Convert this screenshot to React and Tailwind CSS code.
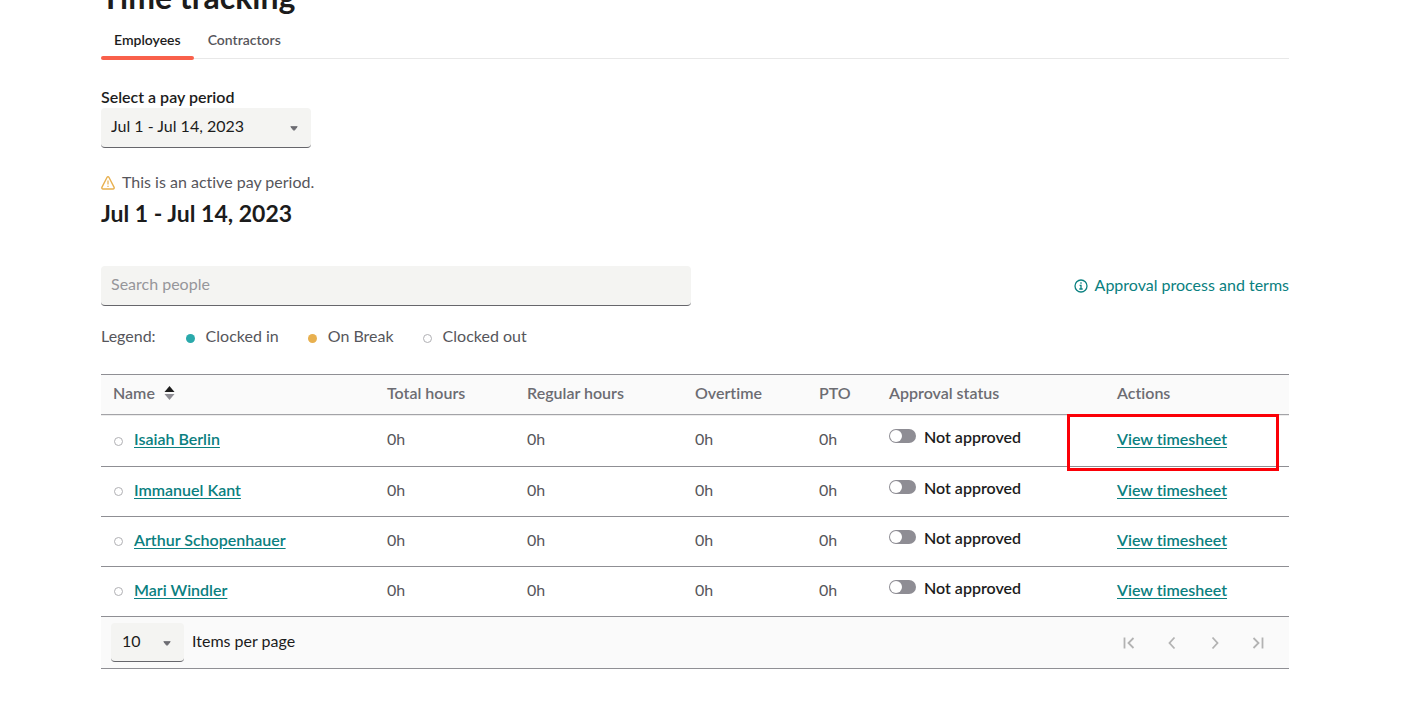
import React from "react";

const people = ["Isaiah Berlin", "Immanuel Kant", "Arthur Schopenhauer", "Mari Windler"];

function Caret({ className }) {
  return (
    <svg className={`pointer-events-none absolute ${className}`} width="8" height="5" viewBox="0 0 8 5" aria-hidden="true">
      <path d="M.8.7h6.4L4.500 4.100q-.5.4-1 0z" fill="#6c6c72" stroke="#6c6c72" strokeWidth="1" strokeLinejoin="round" />
    </svg>
  );
}

function Dot({ kind }) {
  const styles = {
    in: "bg-[#2aa9ab]",
    break: "bg-[#e8b04f]",
    out: "border border-[#b0b0b4] bg-white",
  };
  return <span className={`block h-[9px] w-[9px] shrink-0 rounded-full ${styles[kind]}`} />;
}

function LegendItem({ kind, children }) {
  return (
    <li className="flex items-center gap-[11px]">
      <span className="pt-1"><Dot kind={kind} /></span>
      {children}
    </li>
  );
}

function PageButton({ label, d }) {
  return (
    <button type="button" aria-label={label} disabled className="flex h-6 w-[43px] items-center justify-center">
      <svg width="14" height="14" viewBox="0 0 14 14" fill="none" stroke="#b3b3b3" strokeWidth="1.8" aria-hidden="true">
        <path d={d} />
      </svg>
    </button>
  );
}

function PersonRow({ name, first }) {
  const line = "border-b border-[#8f8f94] px-3 text-left";
  const cell = first ? `${line} border-t border-t-[#ececec]` : line;
  return (
    <tr className={first ? "h-[52px]" : "h-[50px]"}>
      <td className={`${cell} pb-1`}>
        <div className="flex items-center gap-[11px]">
          <span className="pl-px pt-1"><Dot kind="out" /></span>
          <a href="#person" className="font-semibold text-[#0a8080] underline underline-offset-2">{name}</a>
        </div>
      </td>
      <td className={`${cell} pb-1`}>0h</td>
      <td className={`${cell} pb-1`}>0h</td>
      <td className={`${cell} pb-1`}>0h</td>
      <td className={`${cell} pb-1`}>0h</td>
      <td className={`${cell} pb-2`}>
        <label className="flex items-center gap-2 whitespace-nowrap font-semibold text-[#1c1c1c]">
          <input
            type="checkbox"
            role="switch"
            className="relative -top-px h-[14px] w-[27px] shrink-0 appearance-none rounded-full bg-[#8e8d94] p-px before:block before:h-3 before:w-3 before:rounded-full before:bg-white checked:bg-[#0a8080] checked:before:ml-[13px]"
          />
          Not approved
        </label>
      </td>
      <td className={`${cell} relative pb-1`}>
        <a href="#timesheet" className="whitespace-nowrap font-semibold text-[#0a8080] underline underline-offset-2">View timesheet</a>
        {first && <span className="pointer-events-none absolute -bottom-[5px] -left-[38px] -top-[2px] right-[10px] z-10 border-[3px] border-[#fb0007]" />}
      </td>
    </tr>
  );
}

export default function App() {
  const head = "border-y border-t-[#8f8f94] border-b-[#a3a3a7] px-3 pb-[3px] text-left font-semibold";
  return (
    <div className="overflow-hidden bg-white">
      <main className="-mt-[23px] pb-8 pl-[101px] pr-[119px] font-['Lato','Liberation_Sans',sans-serif] text-base leading-5 text-[#56565b] [font-variant-ligatures:none]">
        <h1 className="h-11 text-[32px] font-bold leading-10 text-[#1c1c1c]">Time tracking</h1>

        <nav className="flex h-[38px] border-b border-[#e8e8e8] text-sm font-semibold" aria-label="Worker type">
          <a href="#employees" className="relative px-[13px] pt-[9px] text-[#1c1c1c]">
            Employees
            <span className="absolute -bottom-[2px] left-0 right-0 h-1 rounded-sm bg-[#f9604b]" />
          </a>
          <a href="#contractors" className="px-[14px] pt-[9px]">Contractors</a>
        </nav>

        <div className="flex flex-col items-start pt-7">
          <label htmlFor="period" className="pb-px font-semibold text-[#1c1c1c]">Select a pay period</label>
          <div className="relative w-[210px]">
            <select id="period" className="h-10 w-full appearance-none rounded-[4px] border-b border-[#66666b] bg-[#f4f4f2] pb-1 pl-[10px] text-[#1c1c1c]">
              <option>Jul 1 - Jul 14, 2023</option>
            </select>
            <Caret className="right-[13px] top-[18px]" />
          </div>
        </div>

        <p className="mt-6 flex items-center gap-[7px]">
          <svg className="mt-[2px]" width="14" height="14" viewBox="0 0 14 14" fill="none" stroke="#e8b04f" strokeWidth="1.4" strokeLinejoin="round" aria-hidden="true">
            <path d="M6.1 1.3 1 11.1c-.5 1 0 1.9 1 1.9h10c1 0 1.5-.9 1-1.9L7.9 1.3c-.4-.8-1.4-.8-1.8 0z" />
            <path d="M7 4.5v4M7 9.7v1.3" strokeWidth="1.2" />
          </svg>
          This is an active pay period.
        </p>
        <h2 className="mt-[5px] text-[23px] font-bold leading-8 text-[#1c1c1c]">Jul 1 - Jul 14, 2023</h2>

        <div className="mt-[37px] flex items-center justify-between">
          <input
            type="search"
            aria-label="Search people"
            placeholder="Search people"
            className="h-10 w-[590px] rounded-[4px] border-b border-[#66666b] bg-[#f4f4f2] px-[10px] pb-1 placeholder:text-[#96969a]"
          />
          <a href="#terms" className="flex items-center gap-[7px] pb-[3px] text-[#0a8080]">
            <svg className="mt-[2px]" width="14" height="14" viewBox="0 0 14 14" fill="none" stroke="currentColor" strokeWidth="1.3" aria-hidden="true">
              <circle cx="7" cy="7" r="6" />
              <path d="M7 3.3v1.4M5.6 6.4H7v3.4M5.3 10h3.400" />
            </svg>
            Approval process and terms
          </a>
        </div>

        <div className="mt-5 flex gap-[30px]">
          <span>Legend:</span>
          <ul className="flex gap-[29px]">
            <LegendItem kind="in">Clocked in</LegendItem>
            <LegendItem kind="break">On Break</LegendItem>
            <LegendItem kind="out">Clocked out</LegendItem>
          </ul>
        </div>

        <table className="mt-7 w-full table-fixed border-separate border-spacing-0">
          <thead className="bg-[#fafafa] text-[#6c6c72]">
            <tr className="h-[41px]">
              <th className={`${head} w-[274px]`}>
                <button type="button" className="flex items-center gap-[9px] font-semibold">
                  Name
                  <svg width="11" height="14" viewBox="0 0 11 14" aria-hidden="true">
                    <path d="M5.5 0 10.5 6H.5z" fill="#1c1c1c" />
                    <path d="M.5 8h10l-5 6z" fill="#8e8d94" />
                  </svg>
                </button>
              </th>
              <th className={`${head} w-[140px]`}>Total hours</th>
              <th className={`${head} w-[168px]`}>Regular hours</th>
              <th className={`${head} w-[124px]`}>Overtime</th>
              <th className={`${head} w-[70px]`}>PTO</th>
              <th className={`${head} w-[228px]`}>Approval status</th>
              <th className={`${head} w-[184px]`}>Actions</th>
            </tr>
          </thead>
          <tbody>
            {people.map((name, i) => (
              <PersonRow key={name} name={name} first={i === 0} />
            ))}
          </tbody>
        </table>

        <footer className="flex h-[52px] items-center justify-between border-b border-[#8f8f94] bg-[#fafafa] pl-[10px] pr-[10px] text-[#1c1c1c]">
          <div className="flex items-center gap-2">
            <div className="relative w-[73px]">
              <select id="per-page" className="h-[39px] w-full appearance-none rounded-[4px] border-b border-[#66666b] bg-[#f4f4f2] pb-[2px] pl-[11px]">
                <option>10</option>
              </select>
              <Caret className="right-[13px] top-[18px]" />
            </div>
            <label htmlFor="per-page" className="pb-[3px]">Items per page</label>
          </div>
          <div className="flex">
            <PageButton label="First page" d="M2.500 1.500v11M11.500 2 6.500 7l5 5" />
            <PageButton label="Previous page" d="M9.500 1.500 4.500 7l5 5.500" />
            <PageButton label="Next page" d="M4.500 1.500l5 5.500-5 5.500" />
            <PageButton label="Last page" d="M2.500 2l5 5-5 5M11.500 1.500v11" />
          </div>
        </footer>
      </main>
    </div>
  );
}
